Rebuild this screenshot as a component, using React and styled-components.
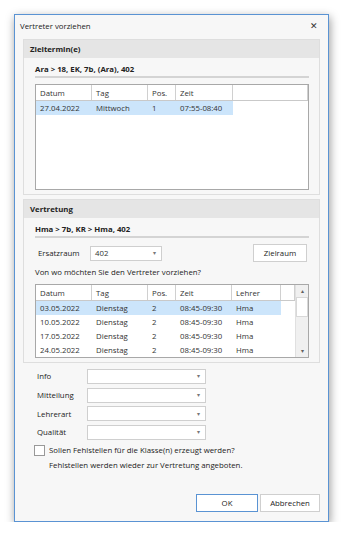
import React from "react";
import styled, { createGlobalStyle } from "styled-components";

const Global = createGlobalStyle`
  body {
    margin: 0;
    background: #ffffff;
    font-family: "Open Sans", "Noto Sans", sans-serif;
    font-size: 7.8px;
    color: #222;
  }
`;

const zielRows = [["27.04.2022", "Mittwoch", "1", "07:55-08:40"]];
const vertrRows = [
  ["03.05.2022", "Dienstag", "2", "08:45-09:30", "Hma"],
  ["10.05.2022", "Dienstag", "2", "08:45-09:30", "Hma"],
  ["17.05.2022", "Dienstag", "2", "08:45-09:30", "Hma"],
  ["24.05.2022", "Dienstag", "2", "08:45-09:30", "Hma"],
];
const fields = ["Info", "Mitteilung", "Lehrerart", "Qualität"];

export default function App() {
  return (
    <>
      <Global />
      <Window>
        <TitleBar>
          <span>Vertreter vorziehen</span>
          <Close>✕</Close>
        </TitleBar>
        <Body>
          <Panel>
            <PanelHead>Zieltermin(e)</PanelHead>
            <PanelContent>
              <SubHead>Ara &gt; 18, EK, 7b, (Ara), 402</SubHead>
              <Table height={106}>
                <Row cols="56px 56px 28px 57px 1fr" head>
                  <Cell head>Datum</Cell>
                  <Cell head>Tag</Cell>
                  <Cell head>Pos.</Cell>
                  <Cell head>Zeit</Cell>
                  <Cell head />
                </Row>
                {zielRows.map((r, i) => (
                  <Row key={i} cols="56px 56px 28px 57px 1fr">
                    {r.map((c, j) => (
                      <Cell key={j} selected={i === 0}>
                        {c}
                      </Cell>
                    ))}
                    <Cell />
                  </Row>
                ))}
              </Table>
            </PanelContent>
          </Panel>

          <Panel>
            <PanelHead>Vertretung</PanelHead>
            <PanelContent>
              <SubHead>Hma &gt; 7b, KR &gt; Hma, 402</SubHead>
              <RoomRow>
                <Label width="52px">Ersatzraum</Label>
                <Select width="72px">
                  <span>402</span>
                  <Caret>▾</Caret>
                </Select>
                <Button>Zielraum</Button>
              </RoomRow>
              <Question>Von wo möchten Sie den Vertreter vorziehen?</Question>
              <Table height={74} flex>
                <TableBody>
                  <Row cols="56px 56px 28px 56px 49px 1fr" head>
                    <Cell head>Datum</Cell>
                    <Cell head>Tag</Cell>
                    <Cell head>Pos.</Cell>
                    <Cell head>Zeit</Cell>
                    <Cell head>Lehrer</Cell>
                    <Cell head />
                  </Row>
                  {vertrRows.map((r, i) => (
                    <Row key={i} cols="56px 56px 28px 56px 49px 1fr">
                      {r.map((c, j) => (
                        <Cell key={j} selected={i === 0}>
                          {c}
                        </Cell>
                      ))}
                      <Cell />
                    </Row>
                  ))}
                </TableBody>
                <ScrollBar>
                  <ScrollArrow>▴</ScrollArrow>
                  <Thumb />
                  <ScrollTrack />
                  <ScrollArrow>▾</ScrollArrow>
                </ScrollBar>
              </Table>
            </PanelContent>
          </Panel>

          <Form>
            {fields.map((f) => (
              <FieldRow key={f}>
                <Label width="50px">{f}</Label>
                <Select width="119px">
                  <span />
                  <Caret>▾</Caret>
                </Select>
              </FieldRow>
            ))}
            <CheckRow>
              <Check />
              <span>Sollen Fehlstellen für die Klasse(n) erzeugt werden?</span>
            </CheckRow>
            <Hint>Fehlstellen werden wieder zur Vertretung angeboten.</Hint>
          </Form>
        </Body>
        <Footer>
          <DialogButton primary>OK</DialogButton>
          <DialogButton>Abbrechen</DialogButton>
        </Footer>
      </Window>
    </>
  );
}

const Window = styled.div`
  margin: 14px 0 0 14px;
  width: 313px;
  height: 506px;
  border: 1px solid #5a93d3;
  background: #f7f7f7;
  box-shadow: 1px 3px 9px rgba(0, 0, 0, 0.4);
  display: flex;
  flex-direction: column;
`;

const TitleBar = styled.div`
  height: 21px;
  display: flex;
  align-items: center;
  justify-content: space-between;
  padding: 0 10px 0 5px;
  color: #1a1a1a;
`;

const Close = styled.span`
  font-size: 8.5px;
  color: #333;
`;

const Body = styled.div`
  flex: 1;
  padding: 3px 8px 0 8px;
  display: flex;
  flex-direction: column;
  gap: 4px;
`;

const Panel = styled.div`
  border: 1px solid #dedede;
  background: #f7f7f7;
`;

const PanelHead = styled.div`
  height: 18px;
  display: flex;
  align-items: center;
  padding-left: 6px;
  background: #e5e5e5;
  font-weight: 700;
  color: #222;
`;

const PanelContent = styled.div`
  padding: 5px 10px 4px 11px;
`;

const SubHead = styled.div`
  height: 13px;
  line-height: 13px;
  font-weight: 700;
  color: #222;
  border-bottom: 2px solid #d4d4d4;
  margin-bottom: 6px;
`;

const Table = styled.div`
  height: ${({ height }) => height}px;
  box-sizing: border-box;
  border: 1px solid #a8a8a8;
  background: #fff;
  display: ${({ flex }) => (flex ? "flex" : "block")};
`;

const TableBody = styled.div`
  flex: 1;
`;

const Row = styled.div`
  display: grid;
  grid-template-columns: ${({ cols }) => cols};
  height: ${({ head }) => (head ? "15px" : "14px")};
  border-bottom: ${({ head }) => (head ? "1px solid #c9c9c9" : "none")};
`;

const Cell = styled.div`
  display: flex;
  align-items: center;
  padding-left: 4px;
  color: #333;
  white-space: nowrap;
  background: ${({ selected }) => (selected ? "#cce5fb" : "transparent")};
  border-right: ${({ head }) => (head ? "1px solid #d0d0d0" : "none")};
`;

const ScrollBar = styled.div`
  width: 12px;
  border-left: 1px solid #e0e0e0;
  background: #f0f0f0;
  display: flex;
  flex-direction: column;
`;

const ScrollArrow = styled.div`
  height: 12px;
  display: flex;
  align-items: center;
  justify-content: center;
  font-size: 6px;
  color: #606060;
`;

const Thumb = styled.div`
  height: 18px;
  background: #fff;
  border: 1px solid #d8d8d8;
`;

const ScrollTrack = styled.div`
  flex: 1;
`;

const RoomRow = styled.div`
  display: flex;
  align-items: center;
  height: 18px;
`;

const Label = styled.span`
  width: ${({ width }) => width};
  padding-left: 3px;
  color: #222;
`;

const Select = styled.div`
  width: ${({ width }) => width};
  height: 15px;
  box-sizing: border-box;
  border: 1px solid #cfcfcf;
  background: #fff;
  display: flex;
  align-items: center;
  justify-content: space-between;
  padding: 0 5px 0 4px;
  color: #333;
`;

const Caret = styled.span`
  font-size: 6px;
  color: #777;
`;

const Button = styled.div`
  margin-left: auto;
  margin-right: 2px;
  width: 54px;
  height: 18px;
  box-sizing: border-box;
  border: 1px solid #cfcfcf;
  background: #fff;
  display: flex;
  align-items: center;
  justify-content: center;
  color: #222;
`;

const Question = styled.div`
  height: 13px;
  line-height: 13px;
  margin: 4px 0 5px;
  color: #222;
`;

const Form = styled.div`
  padding: 0 0 0 11px;
  display: flex;
  flex-direction: column;
`;

const FieldRow = styled.div`
  display: flex;
  align-items: center;
  height: 18.7px;
`;

const CheckRow = styled.div`
  display: flex;
  align-items: center;
  gap: 4px;
  height: 15px;
  margin-top: 1px;
  color: #222;
`;

const Check = styled.div`
  width: 11px;
  height: 11px;
  box-sizing: border-box;
  border: 1px solid #999;
  background: #fff;
`;

const Hint = styled.div`
  padding-left: 15px;
  height: 15px;
  line-height: 15px;
  color: #222;
`;

const Footer = styled.div`
  display: flex;
  justify-content: flex-end;
  gap: 2px;
  padding: 0 8px 9px 0;
`;

const DialogButton = styled.div`
  width: ${({ primary }) => (primary ? "62px" : "60px")};
  height: 18px;
  box-sizing: border-box;
  border: 1px solid ${({ primary }) => (primary ? "#5a93d3" : "#cfcfcf")};
  background: #fff;
  display: flex;
  align-items: center;
  justify-content: center;
  color: #222;
`;
